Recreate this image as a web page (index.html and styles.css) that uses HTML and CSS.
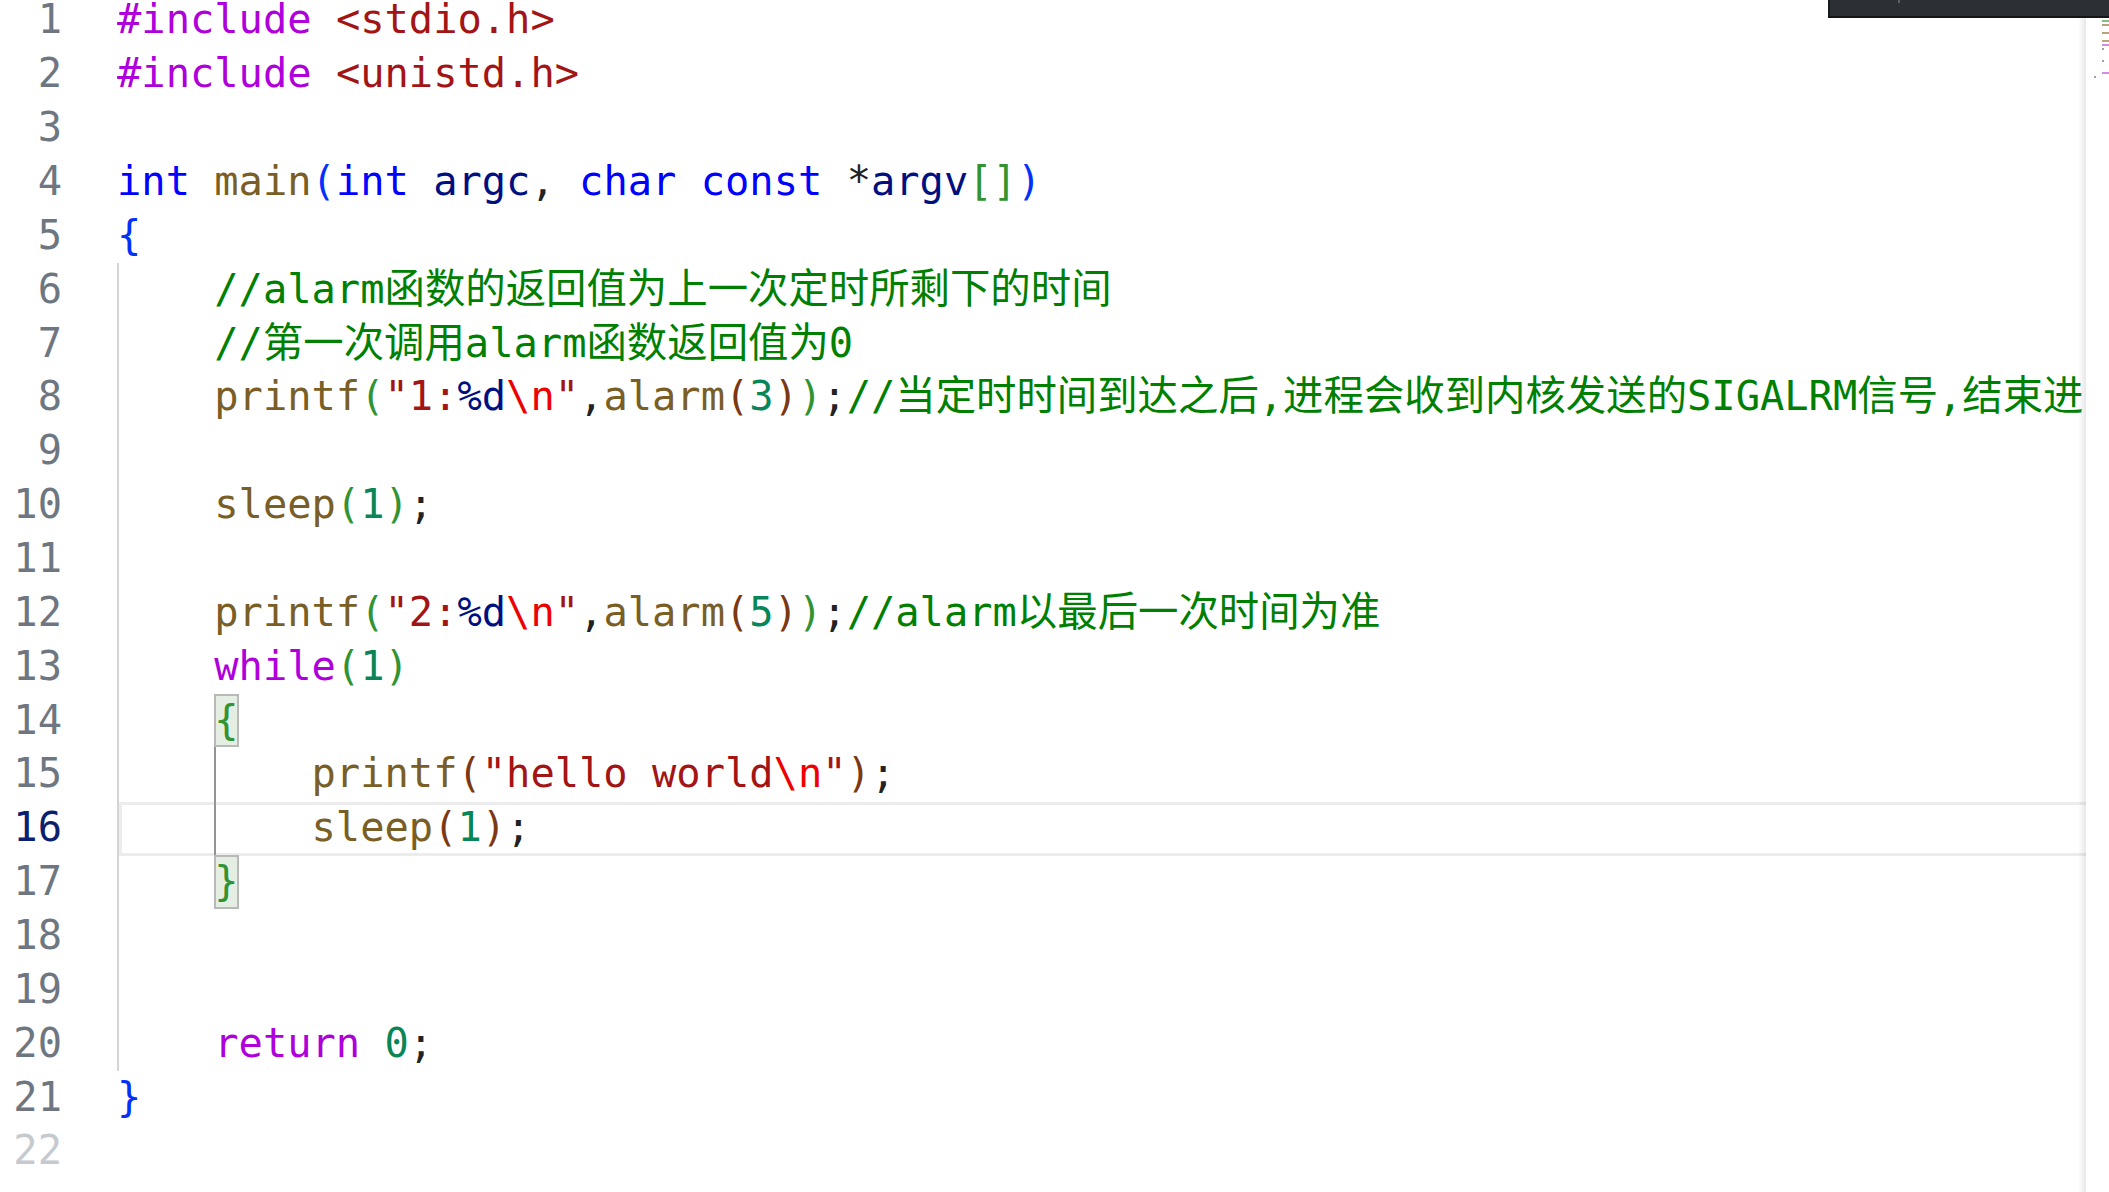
FILE: index.html
```html
<!DOCTYPE html>
<html lang="zh">
<head>
<meta charset="utf-8">
<title>main.c</title>
<link rel="stylesheet" href="styles.css">
</head>
<body>
<div class="editor">
  <div class="gutter">
    <div class="nums">
      <div class="ln">1</div>
      <div class="ln">2</div>
      <div class="ln">3</div>
      <div class="ln">4</div>
      <div class="ln">5</div>
      <div class="ln">6</div>
      <div class="ln">7</div>
      <div class="ln">8</div>
      <div class="ln">9</div>
      <div class="ln">10</div>
      <div class="ln">11</div>
      <div class="ln">12</div>
      <div class="ln">13</div>
      <div class="ln">14</div>
      <div class="ln">15</div>
      <div class="ln active">16</div>
      <div class="ln">17</div>
      <div class="ln">18</div>
      <div class="ln">19</div>
      <div class="ln">20</div>
      <div class="ln">21</div>
      <div class="ln dim">22</div>
    </div>
  </div>
  <div class="code">
    <div class="lines">
<div class="line"><span class="kc">#include</span> <span class="inc">&lt;stdio.h&gt;</span></div>
<div class="line"><span class="kc">#include</span> <span class="inc">&lt;unistd.h&gt;</span></div>
<div class="line"></div>
<div class="line"><span class="st">int</span> <span class="fn">main</span><span class="b1">(</span><span class="st">int</span> <span class="var">argc</span><span class="p">,</span> <span class="st">char</span> <span class="st">const</span> <span class="p">*</span><span class="var">argv</span><span class="b2">[]</span><span class="b1">)</span></div>
<div class="line"><span class="b1">{</span></div>
<div class="block">
<div class="line">    <span class="cm">//alarm函数的返回值为上一次定时所剩下的时间</span></div>
<div class="line">    <span class="cm">//第一次调用alarm函数返回值为0</span></div>
<div class="line">    <span class="fn">printf</span><span class="b2">(</span><span class="str">"1:</span><span class="fmt">%d</span><span class="esc">\n</span><span class="str">"</span><span class="p">,</span><span class="fn">alarm</span><span class="b3">(</span><span class="num">3</span><span class="b3">)</span><span class="b2">)</span><span class="p">;</span><span class="cm">//当定时时间到达之后,进程会收到内核发送的SIGALRM信号,结束进</span></div>
<div class="line"></div>
<div class="line">    <span class="fn">sleep</span><span class="b2">(</span><span class="num">1</span><span class="b2">)</span><span class="p">;</span></div>
<div class="line"></div>
<div class="line">    <span class="fn">printf</span><span class="b2">(</span><span class="str">"2:</span><span class="fmt">%d</span><span class="esc">\n</span><span class="str">"</span><span class="p">,</span><span class="fn">alarm</span><span class="b3">(</span><span class="num">5</span><span class="b3">)</span><span class="b2">)</span><span class="p">;</span><span class="cm">//alarm以最后一次时间为准</span></div>
<div class="line">    <span class="kc">while</span><span class="b2">(</span><span class="num">1</span><span class="b2">)</span></div>
<div class="line">    <span class="b2 match">{</span></div>
<div class="block inner">
<div class="line">        <span class="fn">printf</span><span class="b3">(</span><span class="str">"hello world</span><span class="esc">\n</span><span class="str">"</span><span class="b3">)</span><span class="p">;</span></div>
<div class="line current">        <span class="fn">sleep</span><span class="b3">(</span><span class="num">1</span><span class="b3">)</span><span class="p">;</span></div>
</div>
<div class="line">    <span class="b2 match">}</span></div>
<div class="line"></div>
<div class="line"></div>
<div class="line">    <span class="kc">return</span> <span class="num">0</span><span class="p">;</span></div>
</div>
<div class="line"><span class="b1">}</span></div>
<div class="line"></div>
    </div>
  </div>
  <div class="minimap">
    <div class="mm-rows">
      <div class="mm-row"><span class="mk" style="width:16px"></span></div>
      <div class="mm-row"><span class="mk" style="width:16px"></span></div>
      <div class="mm-row"></div>
      <div class="mm-row"><span class="mt" style="width:6px"></span><span class="mf gap" style="width:8px"></span></div>
      <div class="mm-row"><span class="mb" style="width:2px"></span></div>
      <div class="mm-row"><span class="mc ind" style="width:8px"></span></div>
      <div class="mm-row"><span class="mc ind" style="width:8px"></span></div>
      <div class="mm-row"><span class="mf ind" style="width:12px"></span></div>
      <div class="mm-row"></div>
      <div class="mm-row"><span class="mf ind" style="width:10px"></span></div>
      <div class="mm-row"></div>
      <div class="mm-row"><span class="mf ind" style="width:12px"></span></div>
      <div class="mm-row"><span class="mk ind" style="width:10px"></span></div>
      <div class="mm-row"><span class="mg ind" style="width:2px"></span></div>
      <div class="mm-row"></div>
      <div class="mm-row"></div>
      <div class="mm-row"><span class="mg ind" style="width:2px"></span></div>
      <div class="mm-row"></div>
      <div class="mm-row"></div>
      <div class="mm-row"><span class="mk ind" style="width:12px"></span></div>
      <div class="mm-row"><span class="mg" style="width:2px"></span></div>
      <div class="mm-row"></div>
    </div>
  </div>
  <div class="widget"></div>
</div>
</body>
</html>
```

FILE: styles.css
```css
html, body {
  margin: 0;
  padding: 0;
  background: #ffffff;
}

body {
  width: 2109px;
  height: 1192px;
  overflow: hidden;
  font-family: "DejaVu Sans Mono", "Noto Sans CJK SC", monospace;
  font-size: 40.4px;
}

.editor {
  position: relative;
  display: flex;
  height: 1192px;
  overflow: hidden;
}

/* gutter */
.gutter {
  flex: none;
  width: 117px;
}

.nums {
  margin-top: -6.6px;
}

.ln {
  height: 53.86px;
  line-height: 53.86px;
  width: 62px;
  text-align: right;
  color: #6e7781;
}

.ln.active {
  color: #0b216f;
}

.ln.dim {
  color: #c6cacf;
}

/* code area */
.code {
  flex: 1;
  min-width: 0;
  position: relative;
  z-index: 0;
  overflow: hidden;
}

.lines {
  margin-top: -6.6px;
}

.line {
  height: 53.86px;
  line-height: 53.86px;
  white-space: pre;
  color: #222222;
}

.block {
  position: relative;
}

.block::before {
  content: "";
  position: absolute;
  left: 0;
  top: 0;
  bottom: 0;
  width: 2px;
  background: #d4d4d4;
  z-index: 1;
}

.block.inner::before {
  left: 96.5px;
  background: #949494;
}

.line.current {
  position: relative;
}

.line.current::after {
  content: "";
  position: absolute;
  left: 2px;
  right: 0;
  top: 1px;
  height: 54px;
  box-sizing: border-box;
  border: 3px solid #ececec;
  border-right: none;
  z-index: -1;
}

.match {
  display: inline-block;
  vertical-align: top;
  background: #e5eee3;
  box-shadow: inset 0 0 0 2px #b9b9b9;
}

/* token colours */
.kc { color: #af00db; }
.inc { color: #a31515; }
.st { color: #0000ff; }
.fn { color: #795e26; }
.var { color: #001080; }
.num { color: #098658; }
.str { color: #a31515; }
.esc { color: #ee0000; }
.fmt { color: #001080; }
.cm { color: #008000; }
.p { color: #222222; }
.b1 { color: #0431fa; }
.b2 { color: #319331; }
.b3 { color: #7b3814; }

/* minimap */
.minimap {
  flex: none;
  width: 23px;
  position: relative;
  background: #ffffff;
}

.minimap::before {
  content: "";
  position: absolute;
  left: -8px;
  top: 0;
  bottom: 0;
  width: 8px;
  background: linear-gradient(to right, rgba(0, 0, 0, 0), rgba(0, 0, 0, 0.09));
}

.mm-rows {
  margin-top: -5px;
  padding-left: 8px;
}

.mm-row {
  height: 4px;
  display: flex;
  align-items: center;
}

.mm-row span {
  display: block;
  flex: none;
  height: 2px;
}

.mm-row .ind {
  margin-left: 8px;
}

.mm-row .gap {
  margin-left: 2px;
}

.mk { background: #d48be6; }
.mt { background: #7f7ff5; }
.mf { background: #b9a57c; }
.mc { background: #7fbf7f; }
.mb { background: #8aa0f0; }
.mg { background: #a0a0a0; }

/* partially visible overlay widget at the top right */
.widget {
  position: absolute;
  top: 0;
  left: 1828px;
  right: 0;
  height: 18px;
  box-sizing: border-box;
  background: #2c3035;
  border-left: 2px solid #1a1a1a;
  border-bottom: 2px solid #151515;
  z-index: 2;
}

.widget::after {
  content: "";
  position: absolute;
  left: 68px;
  top: 0;
  width: 2px;
  height: 3px;
  background: #5d6267;
}
```
